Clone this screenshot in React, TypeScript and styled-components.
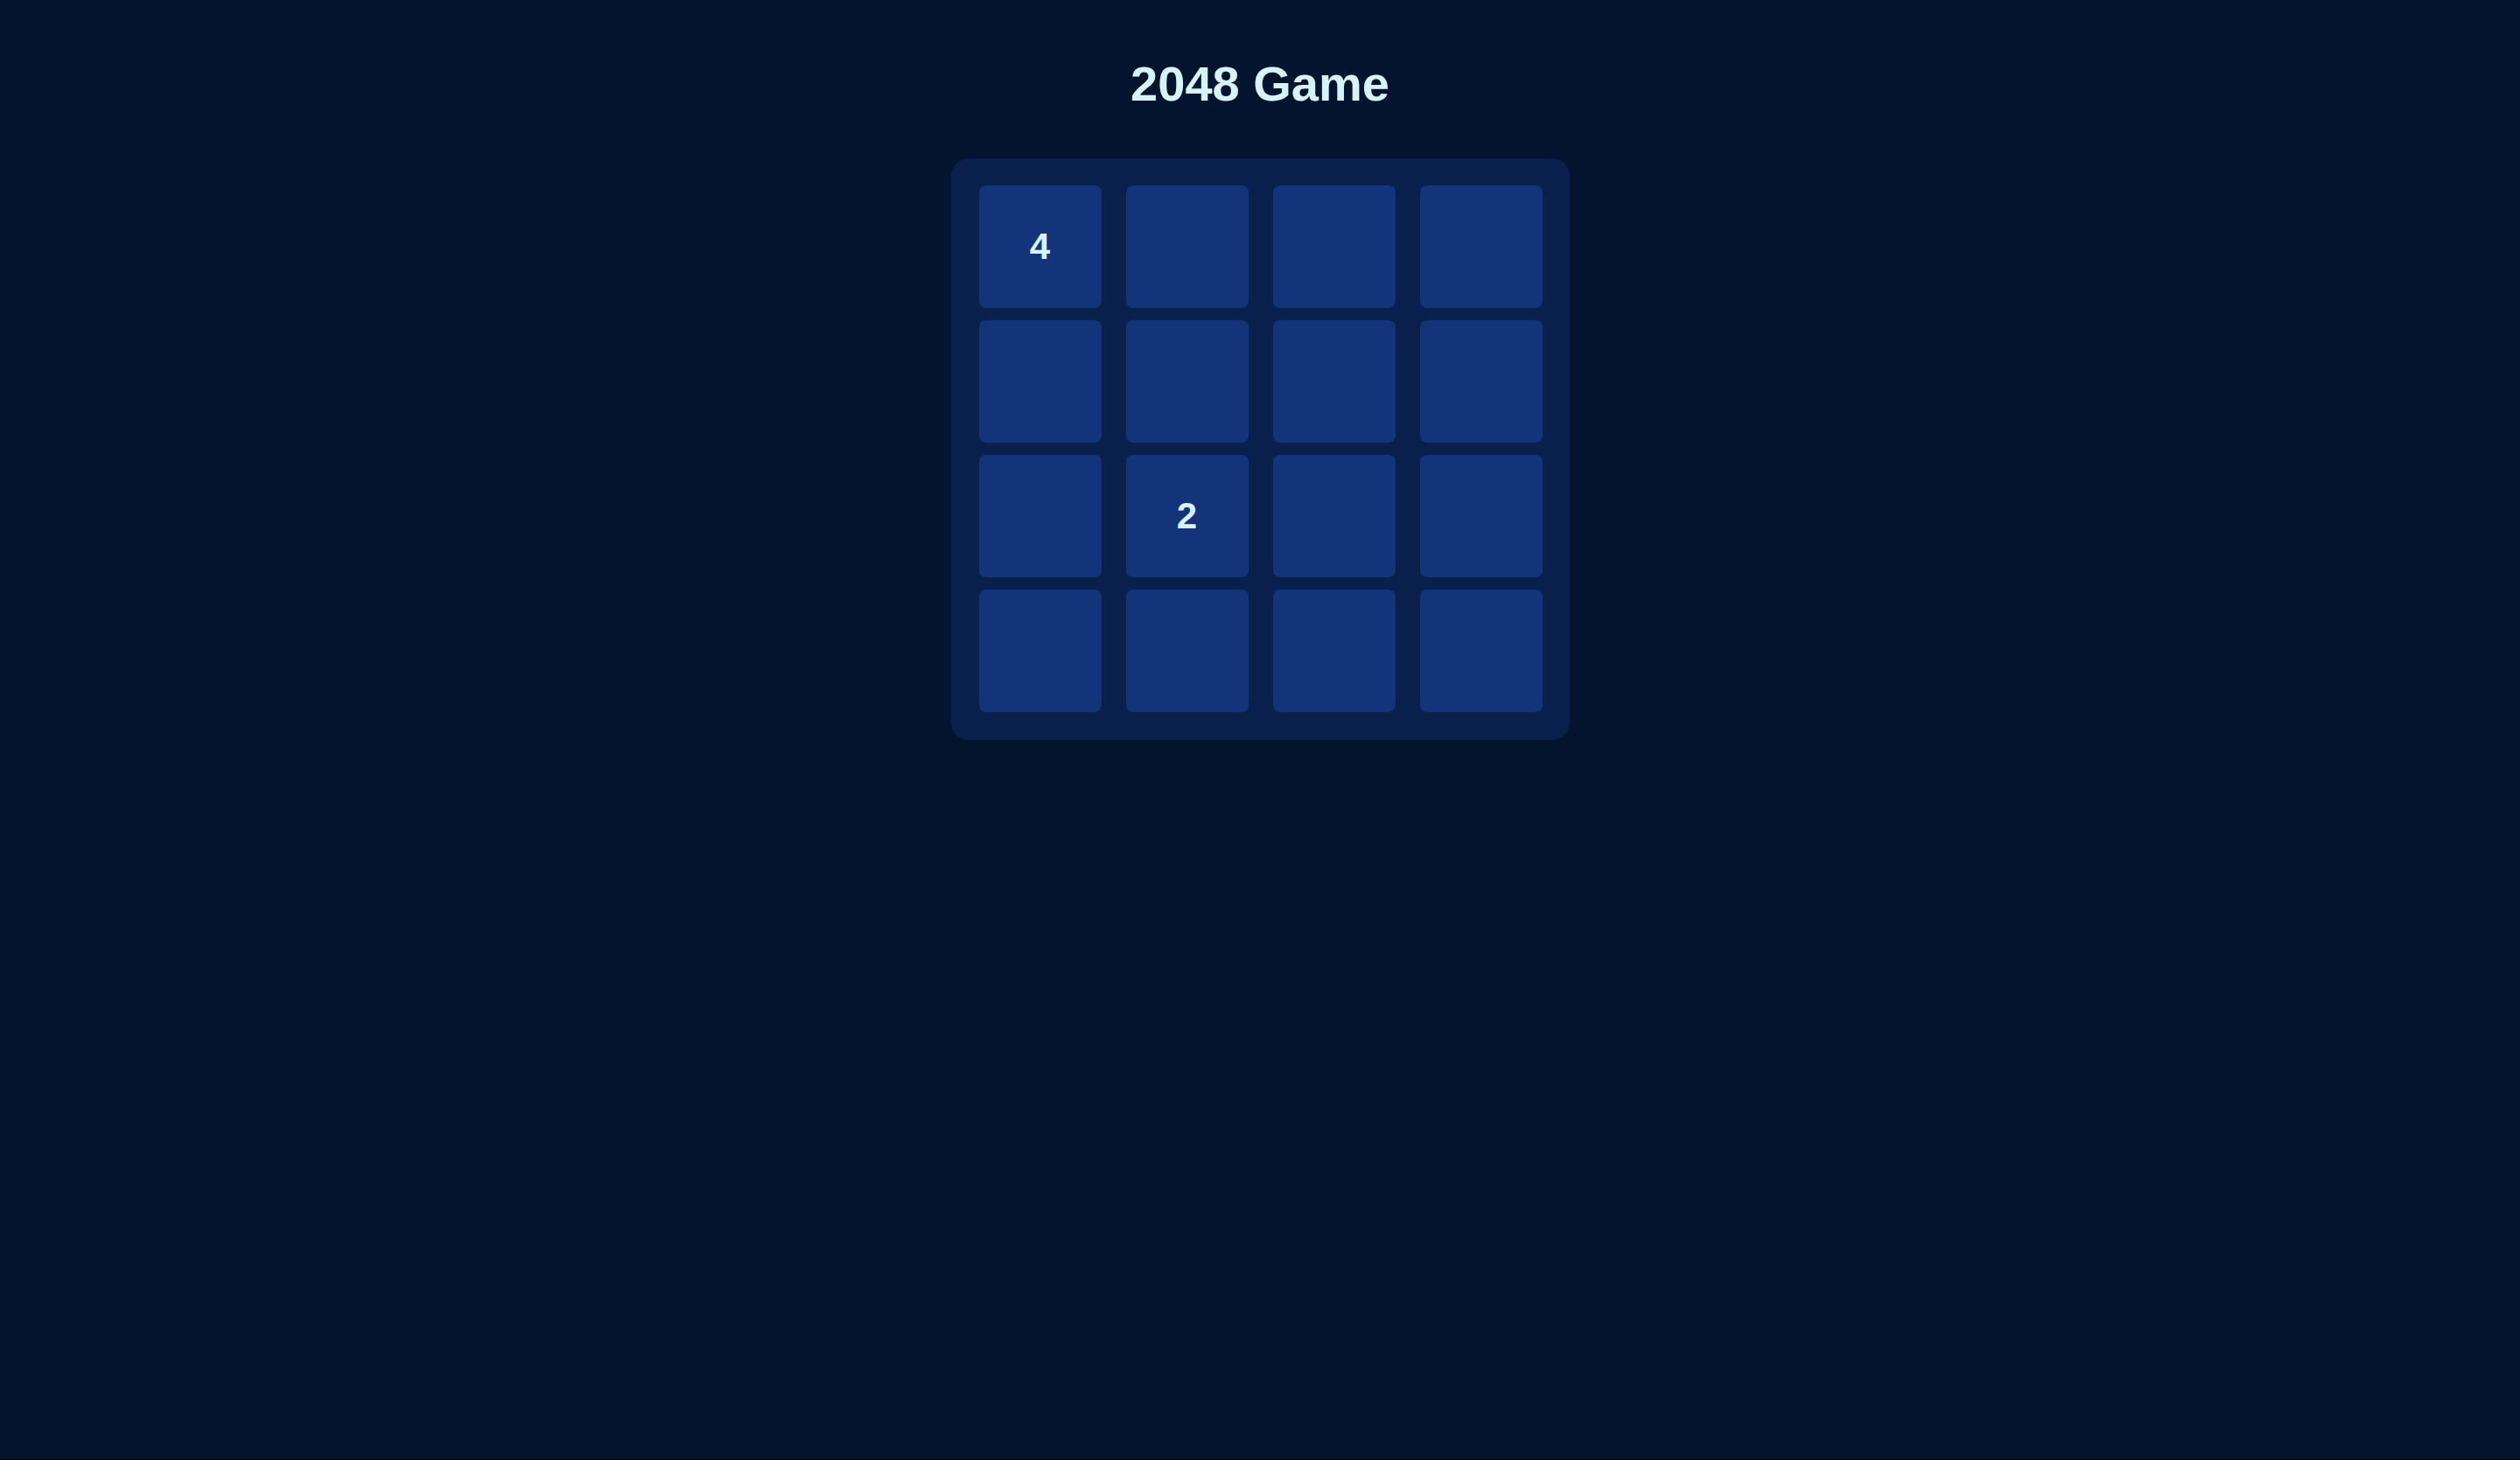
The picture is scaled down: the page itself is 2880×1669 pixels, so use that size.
import React from 'react';
import styled, { createGlobalStyle } from 'styled-components';

const GlobalStyle = createGlobalStyle`
  html {
    background: #000000;
  }

  body {
    margin: 0;
    font-family: "Liberation Sans", Arial, sans-serif;
  }
`;

const Page = styled.div`
  min-height: calc(100vh - 1px);
  background: #02142e;
  display: flex;
  flex-direction: column;
  align-items: center;
  padding-top: 63px;
  box-sizing: border-box;
`;

const Title = styled.h1`
  margin: 0 0 53px;
  font-size: 56px;
  font-weight: 700;
  line-height: normal;
  color: #d6f3f8;
`;

const Board = styled.div`
  display: grid;
  grid-template-columns: repeat(4, 140px);
  grid-auto-rows: 140px;
  gap: 14px 28px;
  padding: 31px 31px 32px 32px;
  background: #09204d;
  border-radius: 20px;
`;

const Tile = styled.div<{ $value: number }>`
  display: flex;
  align-items: center;
  justify-content: center;
  background: #13347a;
  border-radius: 8px;
  color: #d8f3fb;
  font-size: 42px;
  font-weight: 700;
`;

const cells = [
  4, 0, 0, 0,
  0, 0, 0, 0,
  0, 2, 0, 0,
  0, 0, 0, 0,
];

const App = () => {
  return (
    <>
      <GlobalStyle />
      <Page>
        <Title>2048 Game</Title>
        <Board>
          {cells.map((value, i) => (
            <Tile key={i} $value={value}>
              {value > 0 ? value : ''}
            </Tile>
          ))}
        </Board>
      </Page>
    </>
  );
};

export default App;
